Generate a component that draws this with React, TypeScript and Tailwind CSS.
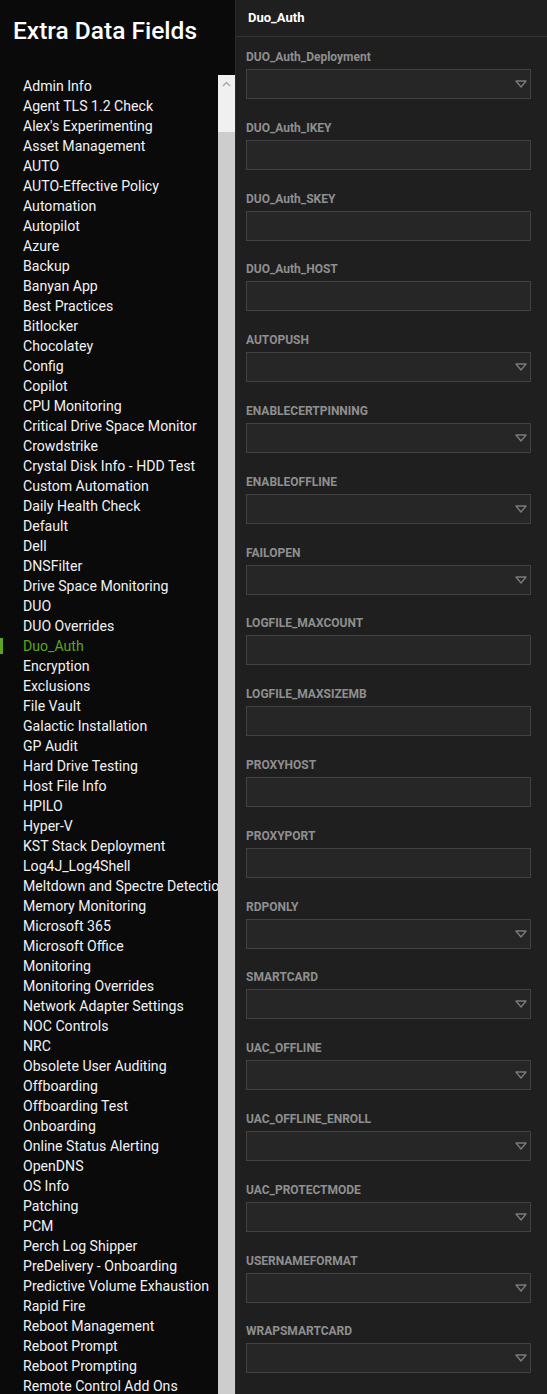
import React from "react";

const items = [
  "Admin Info","Agent TLS 1.2 Check","Alex's Experimenting","Asset Management","AUTO","AUTO-Effective Policy","Automation","Autopilot","Azure","Backup","Banyan App","Best Practices","Bitlocker","Chocolatey","Config","Copilot","CPU Monitoring","Critical Drive Space Monitor","Crowdstrike","Crystal Disk Info - HDD Test","Custom Automation","Daily Health Check","Default","Dell","DNSFilter","Drive Space Monitoring","DUO","DUO Overrides","Duo_Auth","Encryption","Exclusions","File Vault","Galactic Installation","GP Audit","Hard Drive Testing","Host File Info","HPILO","Hyper-V","KST Stack Deployment","Log4J_Log4Shell","Meltdown and Spectre Detection","Memory Monitoring","Microsoft 365","Microsoft Office","Monitoring","Monitoring Overrides","Network Adapter Settings","NOC Controls","NRC","Obsolete User Auditing","Offboarding","Offboarding Test","Onboarding","Online Status Alerting","OpenDNS","OS Info","Patching","PCM","Perch Log Shipper","PreDelivery - Onboarding","Predictive Volume Exhaustion","Rapid Fire","Reboot Management","Reboot Prompt","Reboot Prompting","Remote Control Add Ons",
];

const fields: [string, boolean][] = [
  ["DUO_Auth_Deployment", true],
  ["DUO_Auth_IKEY", false],
  ["DUO_Auth_SKEY", false],
  ["DUO_Auth_HOST", false],
  ["AUTOPUSH", true],
  ["ENABLECERTPINNING", true],
  ["ENABLEOFFLINE", true],
  ["FAILOPEN", true],
  ["LOGFILE_MAXCOUNT", false],
  ["LOGFILE_MAXSIZEMB", false],
  ["PROXYHOST", false],
  ["PROXYPORT", false],
  ["RDPONLY", true],
  ["SMARTCARD", true],
  ["UAC_OFFLINE", true],
  ["UAC_OFFLINE_ENROLL", true],
  ["UAC_PROTECTMODE", true],
  ["USERNAMEFORMAT", true],
  ["WRAPSMARTCARD", true],
];

export default function App() {
  return (
    <div
      className="flex h-[1394px] w-[547px] overflow-hidden bg-[#0a0a0a]"
      style={{ fontFamily: "Roboto, 'Noto Sans', sans-serif" }}
    >
      <div className="flex w-[235px] shrink-0 flex-col bg-[#0a0a0a]">
        <div className="h-[75px] shrink-0 pl-[13px] pt-[14px] text-[24.5px] font-medium leading-[34px] text-white">
          Extra Data Fields
        </div>
        <div className="flex min-h-0 flex-1">
          <div className="w-[218px] overflow-hidden pt-[1px]">
            {items.map((it) => {
              const active = it === "Duo_Auth";
              return (
                <div key={it} className="relative h-[20px]">
                  {active && <div className="absolute left-0 top-[2px] h-[16px] w-[3px] bg-[#5da41f]" />}
                  <div
                    className={`whitespace-nowrap pl-[23px] text-[14.1px] leading-[20px] ${
                      active ? "text-[#5da41f]" : "text-[#f2f2f2]"
                    }`}
                  >
                    {it}
                  </div>
                </div>
              );
            })}
          </div>
          <div className="flex w-[17px] flex-col bg-[#f0f0f0]">
            <div className="flex h-[17px] items-center justify-center">
              <svg width="9" height="6" viewBox="0 0 9 6">
                <path d="M1 5 L4.5 1.5 L8 5" stroke="#a3a3a3" strokeWidth="1.3" fill="none" />
              </svg>
            </div>
            <div className="mt-[40px] flex-1 bg-[#cdcdcd]" />
          </div>
        </div>
      </div>
      <div className="flex-1 border-l border-[#2a2a2a] bg-[#1f1f1f]">
        <div className="h-[37px] border-b border-[#353535] pl-[12px] pt-[9px] text-[13px] font-bold leading-[18px] text-white">
          Duo_Auth
        </div>
        <div className="pl-[10px] pr-[16px] pt-[12px]">
          {fields.map(([name, sel]) => (
            <div key={name} className="h-[70.8px]">
              <div className="h-[20px] text-[12px] font-bold leading-[16px] text-[#8f8f8f]">{name}</div>
              <div className="relative h-[30px] border border-[#424242] bg-[#262626]">
                {sel && (
                  <svg className="absolute right-[3px] top-[10px]" width="12" height="8" viewBox="0 0 12 8">
                    <path d="M1 1 L11 1 L6 7 Z" stroke="#7a7a7a" strokeWidth="1.4" fill="none" strokeLinejoin="round" />
                  </svg>
                )}
              </div>
            </div>
          ))}
        </div>
      </div>
    </div>
  );
}
